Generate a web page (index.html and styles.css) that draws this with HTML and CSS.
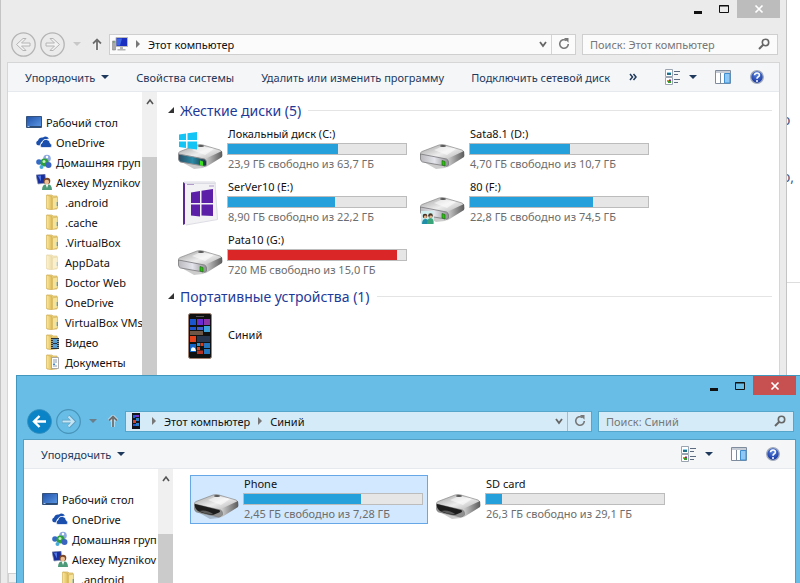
FILE: index.html
```html
<!DOCTYPE html>
<html lang="ru">
<head>
  <meta charset="UTF-8">
  <meta name="viewport" content="width=device-width, initial-scale=1">
  <title>Этот компьютер</title>
  <link rel="stylesheet" href="styles.css">
</head>
<body>
  <!-- icon sprite -->
  <svg class="sprite" width="0" height="0" aria-hidden="true">
    <defs>
      <linearGradient id="g-top" x1="0" y1="0" x2="1" y2="1">
        <stop offset="0" stop-color="#9c9c9c"/><stop offset=".5" stop-color="#ededed"/><stop offset="1" stop-color="#a4a4a4"/>
      </linearGradient>
      <linearGradient id="g-front" x1="0" y1="0" x2="1" y2="0">
        <stop offset="0" stop-color="#b9b9bd"/><stop offset=".5" stop-color="#e4e4ec"/><stop offset="1" stop-color="#8e8e92"/>
      </linearGradient>
      <linearGradient id="g-side" x1="0" y1="0" x2="1" y2="0">
        <stop offset="0" stop-color="#d8d8d8"/><stop offset="1" stop-color="#5d5d5d"/>
      </linearGradient>
      <linearGradient id="g-sys" x1="0" y1="0" x2="1" y2="0">
        <stop offset="0" stop-color="#2b4d63"/><stop offset=".5" stop-color="#2b8aa6"/><stop offset="1" stop-color="#1c3038"/>
      </linearGradient>
      <linearGradient id="g-folder" x1="0" y1="0" x2="1" y2="0">
        <stop offset="0" stop-color="#f9e9a3"/><stop offset="1" stop-color="#dfbb55"/>
      </linearGradient>
      <linearGradient id="g-screen" x1="0" y1="0" x2="1" y2="1">
        <stop offset="0" stop-color="#1f4fa8"/><stop offset="1" stop-color="#5d9be6"/>
      </linearGradient>
      <radialGradient id="g-help" cx=".5" cy=".3" r=".7">
        <stop offset="0" stop-color="#5b86e0"/><stop offset="1" stop-color="#11309c"/>
      </radialGradient>
    </defs>

    <symbol id="drive-body" viewBox="0 0 48 48">
      <path d="M2 35l14 8 9-1 20-12v-3L29 36z" fill="#000" opacity=".2"/>
      <path d="M0 28.500q0-2 2-3l17-6.500q3-1 6 0l17 5q2 1 2 3L28 36z" fill="url(#g-top)" stroke="#8a8a8a" stroke-width=".7"/>
      <path d="M14 24l9-4 13 3-9 6z" fill="#fff" opacity=".55"/>
      <path d="M27 33l17-8v6L28 41q-2 1-2-1z" fill="url(#g-side)"/>
      <ellipse cx="23" cy="20" rx="3" ry="1" fill="#555"/>
    </symbol>
    <symbol id="drive" viewBox="0 0 48 48">
      <use href="#drive-body"/>
      <path d="M.5 28l26 5q2 1 2 3v3q-1 2-3 1L2.500 36q-2-1-2-3z" fill="url(#g-front)" stroke="#77777b" stroke-width=".8"/>
      <path d="M22 34.500l3 1v4.500l-3-1z" fill="#25c40c" stroke="#265c1c" stroke-width=".6"/>
    </symbol>
    <symbol id="drive-system" viewBox="0 0 48 48">
      <use href="#drive-body"/>
      <path d="M.5 28l26 5q2 1 2 3v3q-1 2-3 1L2.500 36q-2-1-2-3z" fill="url(#g-sys)" stroke="#8e8e92" stroke-width="1"/>
      <path d="M22 34.500l3 1v4.500l-3-1z" fill="#3de01c"/>
      <path d="M1 8.500l7-1V14H1zM9.500 7.300L19 6v8H9.500zM1 15.500h7V22l-7-1zM9.500 15.500H19V23.500l-9.500-1.300z" fill="#14c4f5"/>
    </symbol>
    <symbol id="drive-shared" viewBox="0 0 48 48">
      <use href="#drive"/>
      <path d="M1 32h13v13H1z" fill="#cfeef0"/>
      <path d="M2 45q0-5 3.500-5T9 45z" fill="#1f8fa8"/>
      <path d="M7 45q0-6 3.500-6t3 6z" fill="#3aa47a"/>
      <circle cx="5" cy="37" r="2.300" fill="#4d3322"/><circle cx="10.500" cy="36.500" r="2.300" fill="#4d3322"/>
      <circle cx="5.300" cy="38" r="1.400" fill="#e5b48c"/><circle cx="10.800" cy="37.800" r="1.400" fill="#e5b48c"/>
    </symbol>
    <symbol id="drive-open" viewBox="0 0 48 48">
      <use href="#drive-body"/>
      <path d="M.5 28l26 6q2 1 2 3v2q-1 2-4 2L2.500 36q-2-1-2-3z" fill="#8f8f8f" stroke="#777" stroke-width=".6"/>
      <path d="M1 28l24 6q2 1 0 2.500L19 39q-9-1-15-4-4-3-3-7z" fill="#1d1d1d"/>
      <path d="M5 35q7-2 15 3.500Q11 38 5 35z" fill="#5c5c5c"/>
    </symbol>
    <symbol id="box" viewBox="0 0 48 48">
      <path d="M5 3l2 1v41l-2 1z" fill="#5a2a94"/>
      <path d="M7 3h30l3 37-33 6z" fill="#f2f2f5"/>
      <path d="M6 3h31l.5 1.500H7zM37 4l2.500 36.500L8 46" fill="none" stroke="#dcdce4"/>
      <path d="M9 5.500h7M31 7h5" stroke="#b09bc9" stroke-width="1.200"/>
      <path d="M13 13.500l9-1.500v12h-9zM23.500 11.700L35 10v14H23.500zM13 25.500h9v12l-9-1zM23.500 25.500H35V37l-11.500-.4z" fill="#5b1fa8"/>
    </symbol>
    <symbol id="phone" viewBox="0 0 48 48">
      <rect x="10.500" y="1.500" width="23" height="45" rx="2" fill="#111" stroke="#a08070"/>
      <path d="M18 4.500h8" stroke="#555"/>
      <path d="M12 7h6v6h-6zM12 15h6v3h-6z" fill="#1b56d0"/>
      <path d="M19 7h6v6h-6z" fill="#6a2bd6"/><path d="M26 7h6v6h-6z" fill="#8a35a8"/>
      <path d="M19 15h6v3h-6z" fill="#3c5fd0"/><path d="M26 14h6v6h-6z" fill="#3ba1d8"/>
      <path d="M12 19h13v4H12z" fill="#6d5646"/><path d="M12 24h6v6h-6z" fill="#e2431c"/>
      <path d="M19 24h13v6H19z" fill="#25364e"/><path d="M26 31h6v5h-6zM26 37h6v5h-6z" fill="#2477bd"/>
      <path d="M12 32h6v8h-6z" fill="#1464c8"/><path d="M13 37q1-3 4-1l1 3h-5z" fill="#fff"/>
      <path d="M19 31h3v3h-3z" fill="#2b9ad6"/><path d="M22.500 31h3v3h-3zM19 35h3v3h-3z" fill="#d8401c"/><path d="M19 38.500h6V42h-6z" fill="#b83224"/>
    </symbol>
    <symbol id="phone-small" viewBox="0 0 16 16">
      <path d="M4 0h8v16H4z" fill="#14141c"/>
      <path d="M5 2h2v3H5zM5 11h3v2H5z" fill="#2458d8"/><path d="M7 2h4v2H7z" fill="#7a34c8"/>
      <path d="M5 7h3v3H5z" fill="#d8442a"/><path d="M8 5h3v3H8zM8 10h3v3H8z" fill="#2f7fc4"/>
    </symbol>

    <symbol id="desktop" viewBox="0 0 16 16">
      <path d="M.5 2.500h15v11H.5z" fill="url(#g-screen)" stroke="#34527c"/>
      <path d="M1 12h14v1.500H1z" fill="#2b4a74"/><path d="M1.500 12.500h2" stroke="#9fc3ee"/>
    </symbol>
    <symbol id="onedrive" viewBox="0 0 16 16">
      <path d="M1 11q-2-3 1-4.500Q3 3 7 3.500q3-2.500 6 1l-5 1-3 3-1.500 3z" fill="#1a4fae"/>
      <path d="M5 13.500q-2-3 1-4.500 1-4 4.500-3.500T14 9q3 2 1 4.500z" fill="#1a4fae" stroke="#fff" stroke-width=".7"/>
    </symbol>
    <symbol id="homegroup" viewBox="0 0 16 16">
      <circle cx="11" cy="4.500" r="3.800" fill="#8ea9e0"/><circle cx="3" cy="8" r="2.800" fill="#3469c8"/>
      <circle cx="8.500" cy="8.500" r="4" fill="#2fa13c"/><circle cx="12.500" cy="11" r="3" fill="#3a64c0"/>
      <circle cx="5.500" cy="13" r="2" fill="#49a9d8"/>
      <circle cx="8" cy="7.500" r="1.500" fill="#c8f2c4"/><circle cx="11" cy="3" r="1.200" fill="#fff"/>
    </symbol>
    <symbol id="user" viewBox="0 0 16 16">
      <path d="M0 1l9-1 1 9-8 1z" fill="#1b2f9c" stroke="#8895b0" stroke-width=".7"/><path d="M2 2l3-.5v6z" fill="#4f78e0"/>
      <path d="M6 16q0-6 5-6t5 6z" fill="#4d9a78"/><path d="M9.500 10h3l-1.500 4z" fill="#fff"/>
      <circle cx="11" cy="7" r="3.300" fill="#7c4a2a"/><circle cx="10.800" cy="8" r="2.300" fill="#edbf95"/>
    </symbol>
    <symbol id="folder" viewBox="0 0 16 16">
      <path d="M2 1h5l1 1h4v13H2z" fill="#ecd27e" stroke="#d2b15c" stroke-width=".7"/>
      <path d="M1.500 1L7 2.500V16l-5.500-1.500z" fill="url(#g-folder)" stroke="#d2ae55" stroke-width=".6"/>
      <path d="M7.500 4L12.500 3v11l-5 1.500z" fill="#f6e39a" stroke="#d2ae55" stroke-width=".6"/>
      <path d="M12.300 8v4" stroke="#4b9ac0" stroke-width="1.200"/>
    </symbol>
    <symbol id="folder-video" viewBox="0 0 16 16">
      <use href="#folder"/>
      <path d="M6 4h8v11H6z" fill="#26313a"/><path d="M8 5h4v4H8zM8 10h4v4H8z" fill="#579ecf"/>
      <path d="M7 5v9M13 5v9" stroke="#fff" stroke-dasharray="1 1"/>
    </symbol>
    <symbol id="folder-docs" viewBox="0 0 16 16">
      <use href="#folder"/>
      <path d="M6.500 3.500h7v11h-7z" fill="#fff" stroke="#9a9a9a" stroke-width=".8"/>
      <path d="M8 6h4M8 8h4M8 12h4" stroke="#8a9ab0"/><path d="M8 9.500h2v1.500H8z" fill="#3c8ad0"/>
    </symbol>

    <symbol id="computer" viewBox="0 0 16 16">
      <path d="M.5 5h3v9h-3z" fill="#a9a9a9" stroke="#888" stroke-width=".6"/><path d="M1 6h1.500" stroke="#2cae2c"/>
      <path d="M4 1.500h11.500v9H4z" fill="#1a2fc0" stroke="#b9b9b9"/><path d="M5 2.500h5l-2 7H5z" fill="#3f68e6"/>
      <path d="M8 11h3v2h2.500v1.500h-8V13H8z" fill="#b4b4b4"/>
    </symbol>
    <symbol id="arrow-outline" viewBox="0 0 25 25">
      <circle cx="12.500" cy="12.500" r="11.700" fill="none" stroke="currentColor" stroke-width="1.300"/>
      <path d="M5.500 12.500l6.500-6h3l-4.500 4.500H19v3h-8.500L15 18.500h-3z" fill="#f8f8f8" fill-opacity=".6" stroke="currentColor"/>
    </symbol>
    <symbol id="arrow-solid" viewBox="0 0 25 25">
      <circle cx="12.500" cy="12.500" r="12" fill="#0a84c6" stroke="#3a8fbe" stroke-width=".8"/>
      <path d="M19 12.500H7.500M12.500 7l-5.500 5.500 5.500 5.500" fill="none" stroke="#fff" stroke-width="2.400"/>
    </symbol>
    <symbol id="arrow-light" viewBox="0 0 25 25">
      <circle cx="12.500" cy="12.500" r="11.800" fill="none" stroke="#4792b8" stroke-width="1.200"/>
      <path d="M6 12.500h11.500M12.500 7l5.500 5.500-5.500 5.500" fill="none" stroke="#5c9fc2" stroke-width="3.400"/>
      <path d="M6.500 12.500H17M12.500 7.500l5 5-5 5" fill="none" stroke="#c5e5f5" stroke-width="2"/>
    </symbol>
    <symbol id="up" viewBox="0 0 12 12">
      <path d="M6 12V1.500M2 5.500l4-4 4 4" fill="none" stroke="#fff" stroke-width="3.500" opacity=".6"/>
      <path d="M6 12V1.500M2 5.500l4-4 4 4" fill="none" stroke="currentColor" stroke-width="1.800"/>
    </symbol>
    <symbol id="caret" viewBox="0 0 8 4"><path d="M0 0h8L4 4z" fill="currentColor"/></symbol>
    <symbol id="crumb" viewBox="0 0 4 8"><path d="M0 0l4 4-4 4z" fill="#777"/></symbol>
    <symbol id="chevron" viewBox="0 0 10 10"><path d="M2 3l3 4 3-4" fill="none" stroke="#666" stroke-width="1.800"/></symbol>
    <symbol id="refresh" viewBox="0 0 12 12">
      <path d="M8.500 2.500A4.300 4.300 0 1 0 10.300 6" fill="none" stroke="#777" stroke-width="1.600"/>
      <path d="M6 0h4.500v4.800z" fill="#777"/>
    </symbol>
    <symbol id="search" viewBox="0 0 12 12">
      <circle cx="7.500" cy="4.500" r="3.200" fill="none" stroke="#666" stroke-width="1.600"/><path d="M5 7l-4 4" stroke="#666" stroke-width="2"/>
    </symbol>
    <symbol id="view" viewBox="0 0 16 16">
      <path d="M.5.500h7v7h-7zM.5 8.500h7v7h-7z" fill="#fff" stroke="#9aa4b0"/>
      <path d="M2 3h4v1H2z" fill="#8fd0ea"/><path d="M2 4h4v2H2z" fill="#1f6f88"/>
      <path d="M2 11h2v2H2z" fill="#dd8b20"/><path d="M3 12h3v2H3z" fill="#3a9b30"/><path d="M4 10.500h2V12H4z" fill="#6a30a0"/>
      <path d="M9 2.500h6M9 5.500h4M9 10.500h6M9 13.500h4" stroke="#5d6b80"/>
    </symbol>
    <symbol id="pane" viewBox="0 0 16 16">
      <path d="M.5 1.500h15v13H.5z" fill="#fff" stroke="#7e8c9e"/><path d="M1 2h14v2H1z" fill="#c5ccd6"/>
      <path d="M5.500 4v10" stroke="#7e8c9e"/><path d="M9.500 4.500h5.500V14H9.500z" fill="#8fc8f5" stroke="#3f8fd0"/>
    </symbol>
    <symbol id="help" viewBox="0 0 16 16">
      <circle cx="8" cy="8" r="6.300" fill="url(#g-help)" stroke="#a3acbb" stroke-width="1.300"/>
      <path d="M5.500 6.300Q5.700 4 8 4t2.400 2Q10.500 7.300 9 8q-1 .6-1 1.800" fill="none" stroke="#fff" stroke-width="1.600"/><circle cx="8" cy="12" r="1" fill="#fff"/>
    </symbol>
    <symbol id="more" viewBox="0 0 8 8"><path d="M1 1l2.500 3L1 7M4.500 1L7 4 4.500 7" fill="none" stroke="currentColor" stroke-width="1.500"/></symbol>
    <symbol id="minimize" viewBox="0 0 10 10"><path d="M1 8.500h8" stroke="currentColor" stroke-width="3"/></symbol>
    <symbol id="maximize" viewBox="0 0 10 10"><path d="M.5 1.500h9v7h-9zM0 2h10" fill="none" stroke="currentColor"/></symbol>
    <symbol id="close" viewBox="0 0 10 10"><path d="M1.500 1.500l7 7M8.500 1.500l-7 7" stroke="#fff" stroke-width="1.700"/></symbol>
    <symbol id="toggle" viewBox="0 0 6 6"><path d="M6 0v6H0z" fill="#333"/></symbol>
    <symbol id="scroll-up" viewBox="0 0 8 8"><path d="M1 6l3-4 3 4" fill="none" stroke="#555" stroke-width="1.600"/></symbol>
  </svg>

  <div class="page-behind">
    <p>о</p>
    <p>о,</p>
    <hr>
  </div>

  <section class="window window-back" aria-label="Этот компьютер">
    <div class="titlebar">
      <button class="win-btn" aria-label="Свернуть"><svg><use href="#minimize"/></svg></button>
      <button class="win-btn" aria-label="Развернуть"><svg><use href="#maximize"/></svg></button>
      <button class="win-btn win-close" aria-label="Закрыть"><svg><use href="#close"/></svg></button>
    </div>
    <div class="navbar">
      <button class="round" aria-label="Назад"><svg><use href="#arrow-outline"/></svg></button>
      <button class="round flip" aria-label="Вперед"><svg><use href="#arrow-outline"/></svg></button>
      <button class="recent" aria-label="Последние"><svg><use href="#caret"/></svg></button>
      <button class="up" aria-label="Вверх"><svg><use href="#up"/></svg></button>
      <div class="address">
        <svg class="ico"><use href="#computer"/></svg>
        <svg class="crumb"><use href="#crumb"/></svg>
        <a href="#">Этот компьютер</a>
        <button class="drop" aria-label="Предыдущие"><svg><use href="#chevron"/></svg></button>
        <button class="refresh" aria-label="Обновить"><svg><use href="#refresh"/></svg></button>
      </div>
      <div class="search">
        <input type="text" placeholder="Поиск: Этот компьютер" aria-label="Поиск: Этот компьютер">
        <svg><use href="#search"/></svg>
      </div>
    </div>
    <div class="client">
      <div class="toolbar">
        <button>Упорядочить <svg class="caret"><use href="#caret"/></svg></button>
        <button>Свойства системы</button>
        <button>Удалить или изменить программу</button>
        <button>Подключить сетевой диск</button>
        <button class="more" aria-label="Еще"><svg><use href="#more"/></svg></button>
        <div class="tools">
          <button class="view" aria-label="Вид"><svg class="ico"><use href="#view"/></svg><svg class="caret"><use href="#caret"/></svg></button>
          <button aria-label="Область просмотра"><svg class="ico"><use href="#pane"/></svg></button>
          <button aria-label="Справка"><svg class="ico"><use href="#help"/></svg></button>
        </div>
      </div>
      <div class="panes">
        <nav class="tree">
          <ul>
            <li><a href="#"><svg class="ico"><use href="#desktop"/></svg>Рабочий стол</a></li>
            <li class="lvl1"><a href="#"><svg class="ico"><use href="#onedrive"/></svg>OneDrive</a></li>
            <li class="lvl1"><a href="#"><svg class="ico"><use href="#homegroup"/></svg>Домашняя груп</a></li>
            <li class="lvl1"><a href="#"><svg class="ico"><use href="#user"/></svg>Alexey Myznikov</a></li>
            <li class="lvl2"><a href="#"><svg class="ico"><use href="#folder"/></svg>.android</a></li>
            <li class="lvl2"><a href="#"><svg class="ico"><use href="#folder"/></svg>.cache</a></li>
            <li class="lvl2"><a href="#"><svg class="ico"><use href="#folder"/></svg>.VirtualBox</a></li>
            <li class="lvl2"><a href="#"><svg class="ico hidden-folder"><use href="#folder"/></svg>AppData</a></li>
            <li class="lvl2"><a href="#"><svg class="ico"><use href="#folder"/></svg>Doctor Web</a></li>
            <li class="lvl2"><a href="#"><svg class="ico"><use href="#folder"/></svg>OneDrive</a></li>
            <li class="lvl2"><a href="#"><svg class="ico"><use href="#folder"/></svg>VirtualBox VMs</a></li>
            <li class="lvl2"><a href="#"><svg class="ico"><use href="#folder-video"/></svg>Видео</a></li>
            <li class="lvl2"><a href="#"><svg class="ico"><use href="#folder-docs"/></svg>Документы</a></li>
          </ul>
          <div class="hscroll"></div>
        </nav>
        <div class="scrollbar"><svg><use href="#scroll-up"/></svg><div class="thumb"></div></div>
        <main class="content">
          <h2><svg><use href="#toggle"/></svg>Жесткие диски (5)</h2>
          <div class="tiles">
            <div class="tile">
              <svg><use href="#drive-system"/></svg>
              <div class="info">
                <div class="name">Локальный диск (C:)</div>
                <div class="bar"><div class="fill" style="width:62%"></div></div>
                <div class="free">23,9 ГБ свободно из 63,7 ГБ</div>
              </div>
            </div>
            <div class="tile">
              <svg><use href="#drive"/></svg>
              <div class="info">
                <div class="name">Sata8.1 (D:)</div>
                <div class="bar"><div class="fill" style="width:56%"></div></div>
                <div class="free">4,70 ГБ свободно из 10,7 ГБ</div>
              </div>
            </div>
            <div class="tile">
              <svg><use href="#box"/></svg>
              <div class="info">
                <div class="name">SerVer10 (E:)</div>
                <div class="bar"><div class="fill" style="width:60%"></div></div>
                <div class="free">8,90 ГБ свободно из 22,2 ГБ</div>
              </div>
            </div>
            <div class="tile">
              <svg><use href="#drive-shared"/></svg>
              <div class="info">
                <div class="name">80 (F:)</div>
                <div class="bar"><div class="fill" style="width:69%"></div></div>
                <div class="free">22,8 ГБ свободно из 74,5 ГБ</div>
              </div>
            </div>
            <div class="tile">
              <svg><use href="#drive"/></svg>
              <div class="info">
                <div class="name">Pata10 (G:)</div>
                <div class="bar"><div class="fill full" style="width:95%"></div></div>
                <div class="free">720 МБ свободно из 15,0 ГБ</div>
              </div>
            </div>
          </div>
          <h2><svg><use href="#toggle"/></svg>Портативные устройства (1)</h2>
          <div class="tiles">
            <div class="tile device">
              <svg><use href="#phone"/></svg>
              <div class="info"><div class="name">Синий</div></div>
            </div>
          </div>
        </main>
      </div>
    </div>
  </section>

  <section class="window window-front" aria-label="Синий">
    <div class="titlebar">
      <button class="win-btn" aria-label="Свернуть"><svg><use href="#minimize"/></svg></button>
      <button class="win-btn" aria-label="Развернуть"><svg><use href="#maximize"/></svg></button>
      <button class="win-btn win-close" aria-label="Закрыть"><svg><use href="#close"/></svg></button>
    </div>
    <div class="navbar">
      <button class="round" aria-label="Назад"><svg><use href="#arrow-solid"/></svg></button>
      <button class="round" aria-label="Вперед"><svg><use href="#arrow-light"/></svg></button>
      <button class="recent" aria-label="Последние"><svg><use href="#caret"/></svg></button>
      <button class="up" aria-label="Вверх"><svg><use href="#up"/></svg></button>
      <div class="address">
        <svg class="ico"><use href="#phone-small"/></svg>
        <svg class="crumb"><use href="#crumb"/></svg>
        <a href="#">Этот компьютер</a>
        <svg class="crumb"><use href="#crumb"/></svg>
        <a href="#">Синий</a>
        <button class="drop" aria-label="Предыдущие"><svg><use href="#chevron"/></svg></button>
        <button class="refresh" aria-label="Обновить"><svg><use href="#refresh"/></svg></button>
      </div>
      <div class="search">
        <input type="text" placeholder="Поиск: Синий" aria-label="Поиск: Синий">
        <svg><use href="#search"/></svg>
      </div>
    </div>
    <div class="client">
      <div class="toolbar">
        <button>Упорядочить <svg class="caret"><use href="#caret"/></svg></button>
        <div class="tools">
          <button class="view" aria-label="Вид"><svg class="ico"><use href="#view"/></svg><svg class="caret"><use href="#caret"/></svg></button>
          <button aria-label="Область просмотра"><svg class="ico"><use href="#pane"/></svg></button>
          <button aria-label="Справка"><svg class="ico"><use href="#help"/></svg></button>
        </div>
      </div>
      <div class="panes">
        <nav class="tree">
          <ul>
            <li><a href="#"><svg class="ico"><use href="#desktop"/></svg>Рабочий стол</a></li>
            <li class="lvl1"><a href="#"><svg class="ico"><use href="#onedrive"/></svg>OneDrive</a></li>
            <li class="lvl1"><a href="#"><svg class="ico"><use href="#homegroup"/></svg>Домашняя груп</a></li>
            <li class="lvl1"><a href="#"><svg class="ico"><use href="#user"/></svg>Alexey Myznikov</a></li>
            <li class="lvl2"><a href="#"><svg class="ico"><use href="#folder"/></svg>.android</a></li>
          </ul>
        </nav>
        <div class="scrollbar"><svg><use href="#scroll-up"/></svg><div class="thumb"></div></div>
        <main class="content">
          <div class="tiles">
            <div class="tile selected">
              <svg><use href="#drive-open"/></svg>
              <div class="info">
                <div class="name">Phone</div>
                <div class="bar"><div class="fill" style="width:66%"></div></div>
                <div class="free">2,45 ГБ свободно из 7,28 ГБ</div>
              </div>
            </div>
            <div class="tile">
              <svg><use href="#drive-open"/></svg>
              <div class="info">
                <div class="name">SD card</div>
                <div class="bar"><div class="fill" style="width:9%"></div></div>
                <div class="free">26,3 ГБ свободно из 29,1 ГБ</div>
              </div>
            </div>
          </div>
        </main>
      </div>
    </div>
  </section>
</body>
</html>
```
FILE: styles.css
```css
* { box-sizing: border-box; }
html, body { height: 100%; }
body {
  margin: 0;
  position: relative;
  overflow: hidden;
  background: #fff;
  color: #111;
  font-family: "Noto Sans", "Open Sans", sans-serif;
  font-size: 11px;
}
a { color: inherit; text-decoration: none; }
button {
  font: inherit;
  color: inherit;
  background: none;
  border: none;
  padding: 0;
}
svg { display: block; flex: none; }
.sprite { position: absolute; }
.ico { width: 16px; height: 16px; }

/* strip of the page under the windows */
.page-behind {
  margin-left: auto;
  width: 18px;
  padding-top: 108px;
  font-size: 14px;
  line-height: 24px;
  color: #4a5a80;
}
.page-behind p { margin: 0 0 33px; }
.page-behind hr { margin: 93px 0 0; border: none; border-top: 1px solid #ddd; }

/* windows */
.window {
  position: absolute;
  display: flex;
  flex-direction: column;
  bottom: 0;
  padding: 0 6px;
  border: 1px solid #c4c4c4;
  border-bottom: none;
  background: #ebebeb;
}
.window-back { top: -2px; left: 0; right: 13px; }
.window-front {
  top: 375px;
  left: 16px;
  right: -3px;
  background: #67bde5;
  border-color: #4297bf;
}

.titlebar {
  display: flex;
  justify-content: flex-end;
  align-items: flex-start;
  height: 29px;
}
.win-btn {
  display: flex;
  align-items: center;
  justify-content: center;
  width: 26px;
  height: 19px;
}
.win-btn svg { width: 10px; height: 10px; }
.win-close { width: 43px; background: #bcbcbc; }
.window-front .win-close { background: #c75050; }

.navbar {
  display: flex;
  align-items: center;
  height: 32px;
  margin-bottom: 2px;
  padding: 0 2px 0 4px;
}
.round { width: 25px; margin-right: 4px; color: #b4b4b4; }
.round svg { width: 25px; height: 25px; }
.flip { transform: scaleX(-1); }
.recent { width: 8px; margin: 0 10px 0 4px; color: #c8c8c8; }
.recent svg { width: 8px; height: 4px; }
.up { width: 12px; margin-right: 6px; color: #6e6e6e; }
.up svg { width: 12px; height: 12px; }
.window-front .recent { color: #6b7f8a; }

.address, .search {
  display: flex;
  align-items: center;
  height: 21px;
  border: 1px solid #cfcfcf;
  background: #fbfbfb;
}
.window-front .address, .window-front .search {
  background: #d5ecf8;
  border-color: #56a5cb;
}
.address { flex: 1; padding-left: 2px; }
.crumb { width: 4px; height: 8px; margin: 0 8px; }
.drop {
  display: flex;
  justify-content: center;
  width: 16px;
  margin-left: auto;
}
.drop svg { width: 10px; height: 10px; }
.refresh {
  display: flex;
  align-items: center;
  justify-content: center;
  width: 24px;
  height: 19px;
  border-left: 1px solid #d4d4d4;
}
.window-front .refresh { border-color: #8cc3de; }
.refresh svg { width: 12px; height: 12px; }
.search { width: 196px; margin-left: 6px; padding: 0 7px; }
.search input {
  flex: 1;
  min-width: 0;
  padding: 0;
  border: none;
  background: none;
  font: inherit;
}
.search input::placeholder { color: #777; opacity: 1; }
.search svg { width: 12px; height: 12px; }

.client {
  flex: 1;
  display: flex;
  flex-direction: column;
  min-height: 0;
  border: 1px solid #d6d6d6;
  border-bottom: none;
  background: #fff;
}
.window-front .client { border-color: #539fc4; }
.toolbar {
  display: flex;
  align-items: center;
  gap: 27px;
  height: 29px;
  padding: 0 14px 0 17px;
  background: #f5f6f8;
  border-bottom: 1px solid #e6e9ee;
  color: #1e395b;
  white-space: nowrap;
}
.toolbar button { display: flex; align-items: center; gap: 6px; }
.toolbar .caret { width: 8px; height: 4px; }
.toolbar .more { margin-left: -8px; }
.more svg { width: 8px; height: 8px; }
.toolbar .tools { display: flex; gap: 18px; margin-left: auto; }
.toolbar .view { gap: 8px; }

.panes { flex: 1; display: flex; min-height: 0; }
.tree {
  display: flex;
  flex-direction: column;
  width: 134px;
  overflow: hidden;
}
.tree ul {
  flex: 1;
  min-height: 0;
  margin: 0;
  padding: 20px 0 0 18px;
  list-style: none;
  overflow: hidden;
}
.tree li { height: 20px; white-space: nowrap; }
.tree a { display: flex; align-items: center; gap: 4px; height: 20px; }
.lvl1 { padding-left: 10px; }
.lvl2 { padding-left: 19px; }
.hidden-folder { opacity: .5; }
.hscroll { height: 10px; border: 1px solid #d0d0d0; background: #f0f0f0; }
.scrollbar {
  display: flex;
  flex-direction: column;
  align-items: center;
  width: 15px;
  padding-top: 6px;
  background: #f0f0f0;
}
.scrollbar svg { width: 8px; height: 8px; margin-bottom: 51px; }
.thumb { flex: 1; width: 15px; background: #cbcbcb; }

.content { flex: 1; min-width: 0; padding: 6px 7px 0 0; }
.content h2 {
  display: flex;
  align-items: center;
  height: 24px;
  margin: 0 0 3px;
  padding-left: 11px;
  color: #1e3a99;
  font-size: 14px;
  font-weight: normal;
}
.content h2 svg { width: 6px; height: 6px; margin-right: 6px; }
.content h2::after {
  content: "";
  flex: 1;
  height: 1px;
  margin-left: 7px;
  background: #e4e4e4;
}
.tiles {
  display: grid;
  grid-template-columns: repeat(auto-fill, 238px);
  gap: 4px;
  margin: 0 0 4px 17px;
}
.tile {
  display: flex;
  height: 49px;
  padding: 0 3px;
  border: 1px solid transparent;
}
.tile.selected { background: #d1e8ff; border-color: #66a7e8; }
.tile > svg { width: 48px; height: 48px; }
.info { width: 180px; margin-left: 1px; }
.name { line-height: 15px; margin-bottom: 2px; padding-left: 1px; }
.bar { height: 12px; border: 1px solid #bcbcbc; background: #e6e6e6; }
.fill { height: 100%; background: #26a0da; }
.fill.full { background: #da2626; }
.free { line-height: 17px; padding-left: 1px; color: #6d6d6d; }
.device { align-items: center; }
```
